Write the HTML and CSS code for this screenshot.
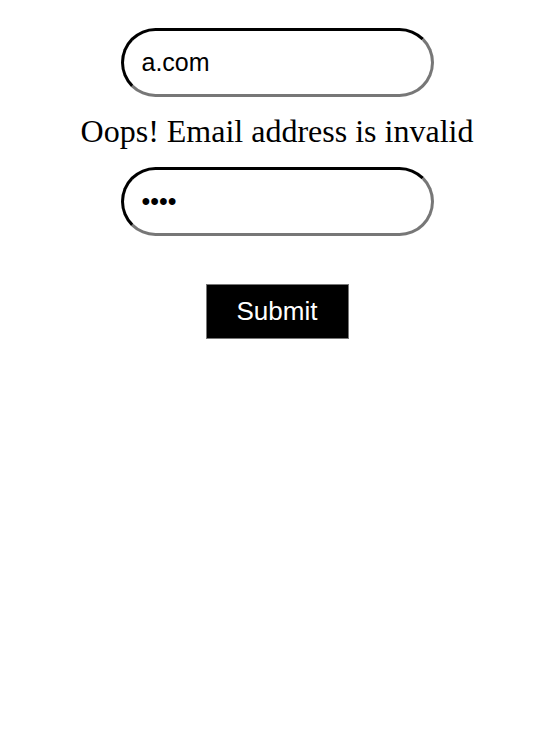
FILE: index.html
```html
<!DOCTYPE html>
<html>
<head>
<meta charset="utf-8">
<link rel="stylesheet" href="styles.css">
</head>
<body>
<form class="form">
  <input class="field" type="text" value="a.com">
  <p class="error">Oops! Email address is invalid</p>
  <input class="field" type="password" value="abcd">
  <button class="submit" type="button">Submit</button>
</form>
</body>
</html>
```
FILE: styles.css
```css
body {
  margin: 0;
  background: #fff;
}
.form {
  display: flex;
  flex-direction: column;
  align-items: center;
  padding-top: 28px;
}
.field {
  box-sizing: border-box;
  width: 313px;
  height: 69px;
  border: 3px inset #767676;
  border-top-color: #000;
  border-left-color: #000;
  border-right-color: #777;
  border-bottom-color: #777;
  border-radius: 35px;
  padding: 0 18px;
  font-family: "Liberation Sans", Arial, sans-serif;
  font-size: 25px;
  color: #000;
  background: #fff;
  outline: none;
}
.error {
  margin: 16px 0 18px;
  font-family: "Liberation Serif", "Times New Roman", serif;
  font-size: 32px;
  line-height: 36px;
  color: #000;
}
.submit {
  margin-top: 48px;
  box-sizing: border-box;
  width: 143px;
  height: 55px;
  background: #000;
  color: #fff;
  border: 1px solid #777;
  font-family: "Liberation Sans", Arial, sans-serif;
  font-size: 26px;
  padding: 0;
}
```
